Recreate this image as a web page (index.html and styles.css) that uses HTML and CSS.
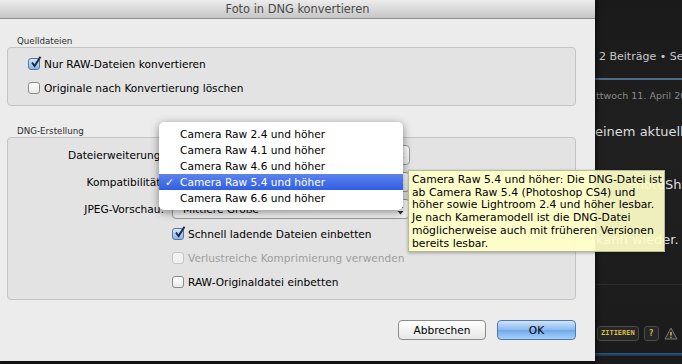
FILE: index.html
```html
<!DOCTYPE html>
<html>
<head>
	<meta charset="utf-8">
	<title>Foto in DNG konvertieren</title>
	<link rel="stylesheet" href="styles.css">
</head>
<body>
<div class="screen">
	<div class="dialog">
		<div class="titlebar">Foto in DNG konvertieren</div>
		<div class="dialog-body">
			<div class="group-label">Quelldateien</div>
			<div class="group group-source">
				<div class="check"><span class="box checked"><svg width="14" height="14" viewBox="0 0 14 14"><path d="M3 6.5 L5.6 10 L11.5 0.8" fill="none" stroke="#1d2b47" stroke-width="2"/></svg></span>Nur RAW-Dateien konvertieren</div>
				<div class="check"><span class="box"></span>Originale nach Konvertierung löschen</div>
			</div>
			<div class="group-label group-label-dng">DNG-Erstellung</div>
			<div class="group group-dng">
				<div class="fields">
					<div class="field-label">Dateierweiterung:</div>
					<div class="popup"><span></span><svg class="arrows" width="7" height="11" viewBox="0 0 7 11"><path d="M0.5 4 L3.5 0.5 L6.5 4 Z M0.5 7 L3.5 10.5 L6.5 7 Z" fill="#333"/></svg></div>
					<div class="field-label">Kompatibilität:</div>
					<div class="popup"><span></span><svg class="arrows" width="7" height="11" viewBox="0 0 7 11"><path d="M0.5 4 L3.5 0.5 L6.5 4 Z M0.5 7 L3.5 10.5 L6.5 7 Z" fill="#333"/></svg></div>
					<div class="field-label">JPEG-Vorschau:</div>
					<div class="popup"><span>Mittlere Größe</span><svg class="arrows" width="7" height="11" viewBox="0 0 7 11"><path d="M0.5 4 L3.5 0.5 L6.5 4 Z M0.5 7 L3.5 10.5 L6.5 7 Z" fill="#333"/></svg></div>
				</div>
				<div class="options">
					<div class="check"><span class="box checked"><svg width="14" height="14" viewBox="0 0 14 14"><path d="M3 6.5 L5.6 10 L11.5 0.8" fill="none" stroke="#1d2b47" stroke-width="2"/></svg></span>Schnell ladende Dateien einbetten</div>
					<div class="check check-disabled"><span class="box"></span>Verlustreiche Komprimierung verwenden</div>
					<div class="check"><span class="box"></span>RAW-Originaldatei einbetten</div>
				</div>
			</div>
			<div class="buttons">
				<div class="btn btn-cancel">Abbrechen</div>
				<div class="btn btn-default">OK</div>
			</div>
		</div>
		<div class="menu">
			<div class="menu-item">Camera Raw 2.4 und höher</div>
			<div class="menu-item">Camera Raw 4.1 und höher</div>
			<div class="menu-item">Camera Raw 4.6 und höher</div>
			<div class="menu-item selected"><span class="tick">✓</span>Camera Raw 5.4 und höher</div>
			<div class="menu-item">Camera Raw 6.6 und höher</div>
		</div>
	</div>
	<div class="forum">
		<div class="f-stats">2 Beiträge • Seite 1 von 1</div>
		<div class="f-divider"></div>
		<div class="f-date">ttwoch 11. April 2012</div>
		<div class="f-text">einem aktuellen</div>
		<div class="f-text f-photo">PhotoShop</div>
		<div class="f-text f-again">kann wieder.</div>
		<div class="f-sep"></div>
		<div class="f-actions">
			<span class="f-btn">ZITIEREN</span>
			<span class="f-btn f-btn-q">?</span>
			<svg class="f-warn" width="14" height="13" viewBox="0 0 14 13"><path d="M7 1 L13 12 L1 12 Z" fill="#2b2b2b" stroke="#777" stroke-width="1"/><path d="M7 5 V8.5 M7 9.8 V10.8" stroke="#d9bf4c" stroke-width="1.4"/></svg>
		</div>
		<div class="f-bottom"></div>
	</div>
	<div class="tooltip">Camera Raw 5.4 und höher: Die DNG-Datei ist<br>ab Camera Raw 5.4 (Photoshop CS4) und<br>höher sowie Lightroom 2.4 und höher lesbar.<br>Je nach Kameramodell ist die DNG-Datei<br>möglicherweise auch mit früheren Versionen<br>bereits lesbar.</div>
</div>
</body>
</html>
```

FILE: styles.css
```css
body {
	margin: 0;
	font-family: "DejaVu Sans", "Liberation Sans", sans-serif;
}
.screen {
	position: relative;
	display: flex;
	width: 682px;
	height: 364px;
	background: #171717;
	overflow: hidden;
}

/* dialog */
.dialog {
	position: relative;
	z-index: 1;
	flex: none;
	width: 595px;
	height: 361px;
	background: #ececec;
	box-shadow: 1px 0 5px rgba(0, 0, 0, 0.7);
	font-size: 10.6px;
	color: #000;
}
.titlebar {
	height: 18px;
	line-height: 18px;
	border-bottom: 1px solid #8e8e8e;
	background: linear-gradient(#ececec, #c6c6c6);
	text-align: center;
	font-size: 11.4px;
	color: #4a4a4a;
}
.dialog-body {
	padding: 16px 19px 0 7px;
}
.group-label {
	padding-left: 10px;
	font-size: 8.7px;
	line-height: 12px;
	color: #2c2c2c;
}
.group-label-dng {
	margin-top: 19px;
}
.group {
	background: #e3e3e3;
	border: 1px solid #c4c4c4;
	border-radius: 4px;
}
.group-source {
	padding: 4px 20px 5px;
}
.group-dng {
	padding: 7px 0 5px;
}
.check {
	display: flex;
	align-items: center;
	gap: 4px;
	height: 24px;
	white-space: nowrap;
}
.box {
	position: relative;
	box-sizing: border-box;
	width: 12px;
	height: 12px;
	border: 1px solid #8a8a8a;
	border-radius: 3px;
	background: linear-gradient(#ffffff, #e9e9e9);
}
.box.checked {
	border-color: #54779f;
	background: linear-gradient(#d4e5f8, #8cb6e6);
}
.box svg {
	position: absolute;
	left: 0;
	top: -3px;
}
.check-disabled {
	color: #9d9d9d;
}
.check-disabled .box {
	border-color: #c3c3c3;
	background: #f1f1f1;
}

.fields {
	display: grid;
	grid-template-columns: 156px 238px;
	column-gap: 8px;
	row-gap: 7px;
	align-items: center;
}
.field-label {
	text-align: right;
	white-space: nowrap;
}
.popup {
	display: flex;
	align-items: center;
	justify-content: space-between;
	box-sizing: border-box;
	height: 20px;
	padding: 0 5px 0 10px;
	border: 1px solid #9a9a9a;
	border-radius: 4px;
	background: linear-gradient(#ffffff, #ececec);
}
.options {
	margin-top: 3px;
	padding-left: 164px;
}

.buttons {
	display: flex;
	justify-content: flex-end;
	gap: 11px;
	margin-top: 20px;
}
.btn {
	box-sizing: border-box;
	height: 20px;
	line-height: 18px;
	border: 1px solid #8c8c8c;
	border-radius: 4px;
	background: linear-gradient(#ffffff, #e6e6e6);
	text-align: center;
}
.btn-cancel {
	width: 88px;
}
.btn-default {
	width: 79px;
	border-color: #4c78b4;
	background: linear-gradient(#cfe3fa, #8ab9ef 50%, #6fa7ec 51%, #a6d0f7);
}

/* popup menu over the dialog */
.menu {
	position: absolute;
	left: 159px;
	top: 122px;
	width: 244px;
	padding: 4px 0;
	background: #ffffff;
	border-radius: 5px;
	box-shadow: 0 2px 8px rgba(0, 0, 0, 0.45);
}
.menu-item {
	position: relative;
	height: 16px;
	line-height: 16px;
	padding-left: 21px;
}
.menu-item.selected {
	background: linear-gradient(#5d83ee, #2f5ee2);
	color: #fff;
}
.tick {
	position: absolute;
	left: 6px;
}

/* tooltip */
.tooltip {
	position: absolute;
	z-index: 2;
	left: 408px;
	top: 170px;
	box-sizing: border-box;
	width: 257px;
	height: 82px;
	padding: 3px 3px 0 3px;
	background: rgba(255, 255, 200, 0.93);
	border: 1px solid #b8b89a;
	box-shadow: 0 1px 3px rgba(0, 0, 0, 0.3);
	font-size: 10.8px;
	line-height: 12.7px;
	white-space: nowrap;
	color: #000;
}

/* forum page behind the dialog */
.forum {
	position: relative;
	flex: 1;
	overflow: hidden;
	white-space: nowrap;
	background: linear-gradient(#1a1a1a, #202020 40%, #1b1b1b);
	color: #c8c8c8;
}
.f-stats {
	margin-top: 50px;
	padding-left: 4px;
	line-height: 14px;
	font-size: 11px;
}
.f-divider {
	height: 2px;
	margin-top: 14px;
	background: #4d6a86;
}
.f-date {
	margin-top: 10px;
	padding-left: 1px;
	line-height: 12px;
	font-size: 9.5px;
	color: #8a8a8a;
}
.f-text {
	font-size: 13px;
	line-height: 16px;
	color: #dedede;
}
.f-date + .f-text {
	margin-top: 22px;
}
.f-photo {
	margin-top: 37px;
	padding-left: 33px;
}
.f-again {
	margin-top: 39px;
	padding-left: 1px;
}
.f-sep {
	height: 1px;
	margin-top: 36px;
	background: #2c2c2c;
}
.f-actions {
	display: flex;
	align-items: center;
	gap: 5px;
	margin-top: 41px;
	padding-left: 2px;
}
.f-btn {
	height: 13px;
	line-height: 13px;
	padding: 0 3px;
	border: 1px solid #4a4a4a;
	border-radius: 3px;
	background: #262626;
	font-family: "DejaVu Sans Mono", monospace;
	font-size: 7px;
	font-weight: bold;
	color: #d9bf4c;
}
.f-btn-q {
	padding: 0 4px;
	font-size: 8px;
}
.f-warn {
	flex: none;
}
.f-bottom {
	position: absolute;
	left: 0;
	right: 0;
	top: 353px;
	height: 3px;
	background: linear-gradient(#2f5a84, #163049);
}
```
